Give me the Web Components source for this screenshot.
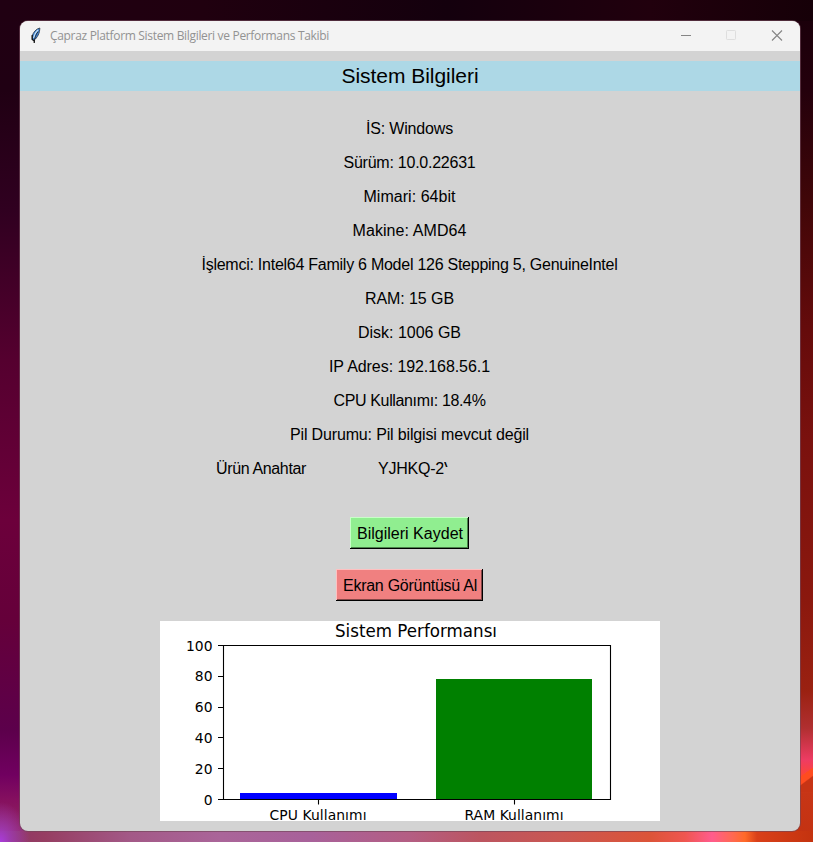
<!DOCTYPE html>
<html lang="tr">
<head>
<meta charset="utf-8">
<title>Sistem Bilgileri</title>
<style>
html,body{margin:0;height:100%;overflow:hidden}
</style>
</head>
<body>
<desktop-view>
  <app-window caption="Çapraz Platform Sistem Bilgileri ve Performans Takibi">
    <section-title w="137">Sistem Bilgileri</section-title>
    <info-list>
      <info-row w="87">İS: Windows</info-row>
      <info-row w="132">Sürüm: 10.0.22631</info-row>
      <info-row w="92">Mimari: 64bit</info-row>
      <info-row w="114">Makine: AMD64</info-row>
      <info-row w="416">İşlemci: Intel64 Family 6 Model 126 Stepping 5, GenuineIntel</info-row>
      <info-row w="89">RAM: 15 GB</info-row>
      <info-row w="103">Disk: 1006 GB</info-row>
      <info-row w="161">IP Adres: 192.168.56.1</info-row>
      <info-row w="152">CPU Kullanımı: 18.4%</info-row>
      <info-row w="239">Pil Durumu: Pil bilgisi mevcut değil</info-row>
      <key-row></key-row>
    </info-list>
    <action-bar>
      <tk-button w="106" style="--bg:#90ee90;--hi:#c8ffc8;--lo:#4b834b">Bilgileri Kaydet</tk-button>
      <tk-button w="134" style="--bg:#f08080;--hi:#ffc0c0;--lo:#844646">Ekran Görüntüsü Al</tk-button>
    </action-bar>
    <bar-chart></bar-chart>
  </app-window>
</desktop-view>
<script>
const define = (name, html, setup) => customElements.define(name, class extends HTMLElement {
  connectedCallback() {
    if (this.shadowRoot) return;
    this.attachShadow({mode: 'open'}).innerHTML = html;
    if (setup) setup(this, this.shadowRoot);
  }
});

// Spreads the text evenly over the width given in its "w" attribute.
const fit = (el, target, width) => {
  const n = (el.textContent.trim() || target.textContent).length;
  target.style.letterSpacing = (width - target.getBoundingClientRect().width) / n + 'px';
};
const fitHost = (host, root) => fit(host, root.querySelector('span'), +host.getAttribute('w'));

define('desktop-view', `<style>
:host{display:flex;box-sizing:border-box;width:813px;height:842px;padding:21px 13px 11px 20px;
background:
 linear-gradient(90deg,#200012,#20000f 25%,#14000d 55%,#21000d 80%,#160008) 0 0/813px 21px no-repeat,
 radial-gradient(ellipse 30px 40px at 0 842px,#aa3cdc,#a03cc0c0 35%,transparent) 0 0/100% 100% no-repeat,
 linear-gradient(125deg,transparent 744px,#c4330f 745px) 0 0/0 0 no-repeat,
 linear-gradient(90deg,#8d3366 0,#963e62 45px,#a35987 130px,#aa6599 220px,#a8619a 310px,#b45e83 410px,#bc5560 480px,#ca5752 560px,#dc5438 650px,#ef5650 685px,#ff5c8d 712px,#ff6950 733px,#ff6a28 745px,#d94019 757px,#c4330f 100%) 0 831px/100% 11px no-repeat,
 linear-gradient(180deg,#200012 0,#200013 90px,#300020 210px,#55002f 360px,#6c003b 520px,#65003a 620px,#5c004b 730px,#710060 775px,#85105f 800px,#94305e 842px) 0 0/20px 100% no-repeat,
 linear-gradient(143deg,transparent 50%,#ff4c20 51%,#ff4c20 66%,#c73415 69%) 800px 752px/13px 40px no-repeat,
 linear-gradient(180deg,#18000a 0,#24000c 90px,#400608 200px,#650b0b 330px,#7a110e 440px,#8b180e 600px,#9a2111 690px,#b02f30 728px,#ee3c63 760px,#ff472f 778px,#c73516 793px,#c33211 842px) 800px 0/13px 100% no-repeat,
 linear-gradient(90deg,#8d3366 50%,#c4330f 50%) 0 421px/100% 421px no-repeat,
 #200010}
</style><slot></slot>`);

define('app-window', `<style>
:host{display:flex;flex-direction:column;width:780px;height:810px;border-radius:8px;overflow:hidden;background:#d3d3d3;box-shadow:0 0 0 1px #704657a0;font-family:"Liberation Sans",Arial,sans-serif;color:#000}
header{display:flex;align-items:center;height:30px;flex:none;background:#f3f3f3;color:#929292;font:12px "Open Sans","Noto Sans",sans-serif}
.icon{margin-left:10px;width:12px;height:18px;flex:none;margin-top:-2px}
.cap{margin-left:8px;line-height:30px;white-space:nowrap}
.ctl{margin-left:auto;width:138px;height:30px}
main{display:flex;flex-direction:column;align-items:center;padding-top:10px}
</style>
<header>
<svg class="icon" viewBox="0 0 12 18"><path d="M9.800 2C5.800 3 3.200 6.500 2.200 10v3.500l1.600 1C7.500 11.500 9.800 7 9.800 2z" fill="#3f86dc" stroke="#33414e" stroke-width=".9"/><path d="M8 4C5.500 6.500 4.300 9 3.700 12" stroke="#c4e2f8" stroke-width="1.400" fill="none"/><path d="M8 5.500C5.500 9 4.500 12 4.300 17" stroke="#111" stroke-width=".8" fill="none"/><path d="M2.200 9v4.500l2 1.200v2" stroke="#111" stroke-width="1.200" fill="none"/></svg>
<span class="cap"></span>
<svg class="ctl" viewBox="0 0 138 30" fill="none"><path d="M19 14.500h10" stroke="#858585"/><rect x="64.500" y="9.500" width="9" height="9" rx=".8" stroke="#dedede"/><path d="M110 9.500l10 10M120 9.500l-10 10" stroke="#858585" stroke-width="1.100"/></svg>
</header><main><slot></slot></main>`, (host, root) => {
  const cap = root.querySelector('.cap');
  cap.textContent = host.getAttribute('caption');
  cap.style.letterSpacing = (279 - cap.getBoundingClientRect().width) / cap.textContent.length + 'px';
});

define('section-title', `<style>
:host{display:flex;justify-content:center;width:100%;height:30px;background:#add8e6;font-size:21px;line-height:30px}
span{white-space:nowrap}
</style><span><slot></slot></span>`, fitHost);

define('info-list', `<style>:host{display:flex;flex-direction:column;align-items:center;box-sizing:border-box;padding:21px 1px 0 0;width:100%}</style><slot></slot>`);

define('info-row', `<style>
:host{display:flex;justify-content:center;height:34px;line-height:34px;font-size:16px}
span{white-space:nowrap}
</style><span><slot></slot></span>`, fitHost);

define('key-row', `<style>
:host{display:flex;box-sizing:border-box;width:100%;padding-left:196px;height:34px;line-height:34px;font-size:16px;white-space:nowrap}
.name{width:162px}.cut{width:4px;height:19px;overflow:hidden;clip-path:inset(0 0 4px 0)}
</style><div class="name"><span data-w="90">Ürün Anahtar</span></div><span data-w="66">YJHKQ-2</span><div class="cut">V</div>`,
(host, root) => root.querySelectorAll('[data-w]').forEach(s => fit(s, s, +s.dataset.w)));

define('action-bar', `<style>:host{display:flex;flex-direction:column;align-items:center;gap:20px;padding:31px 1px 20px 0}</style><slot></slot>`);

define('tk-button', `<style>
:host{display:block}
button{all:unset;display:block;box-sizing:border-box;height:32px;padding:1px 6px 0 7px;font-size:16px;line-height:31px;background:var(--bg);box-shadow:inset -1px -1px #000,inset 1px 1px var(--hi),inset -2px -2px var(--lo)}
span{white-space:nowrap}
</style><button><span><slot></slot></span></button>`, fitHost);

define('bar-chart', `<style>:host{display:block;width:500px;height:200px;background:#fff}svg{display:block;font:13.890px "DejaVu Sans",sans-serif}</style>
<svg width="500" height="200" viewBox="0 0 500 200">
<rect x="80" y="172" width="157" height="7" fill="#00f"/><rect x="276" y="58" width="156" height="121" fill="#008000"/>
<path d="M63.500 24.500h387v154h-387zM58 24.500h5M58 55.500h5M58 86.500h5M58 116.500h5M58 147.500h5M58 178.500h5M158.500 179v4.500M354.500 179v4.500" fill="none" stroke="#000" stroke-width="1.100"/>
<text x="256" y="16" text-anchor="middle" font-size="17.300" textLength="162" lengthAdjust="spacingAndGlyphs">Sistem Performansı</text>
<g text-anchor="end"><text x="52.500" y="30">100</text><text x="52.500" y="60">80</text><text x="52.500" y="91">60</text><text x="52.500" y="122">40</text><text x="52.500" y="153">20</text><text x="52.500" y="184">0</text></g>
<g text-anchor="middle"><text x="158" y="199" textLength="97">CPU Kullanımı</text><text x="354" y="199" textLength="99">RAM Kullanımı</text></g>
</svg>`);
</script>
</body>
</html>
